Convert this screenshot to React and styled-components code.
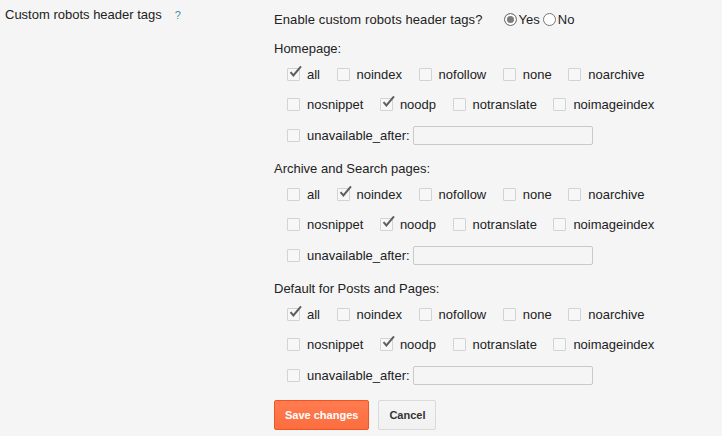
import React from "react";
import styled, { createGlobalStyle } from "styled-components";

const GlobalStyle = createGlobalStyle`
  html, body {
    margin: 0;
    padding: 0;
    background: #f5f5f5;
  }
  body {
    font-family: "Liberation Sans", Arial, sans-serif;
    font-size: 13px;
    color: #222;
  }
`;

const ROW_ONE = ["all", "noindex", "nofollow", "none", "noarchive"];
const ROW_TWO = ["nosnippet", "noodp", "notranslate", "noimageindex"];

const GROUPS = [
  { title: "Homepage:", checked: ["all", "noodp"] },
  { title: "Archive and Search pages:", checked: ["noindex", "noodp"] },
  { title: "Default for Posts and Pages:", checked: ["all", "noodp"] }
];

function Checkbox({ label, checked }) {
  return (
    <Item>
      <Box>
        {checked && (
          <CheckMark viewBox="0 0 16 16" width="16" height="16">
            <path
              d="M2.5 7.2 L5.4 10.4 L13 1.4"
              fill="none"
              stroke="#5e5e5e"
              strokeWidth="2"
            />
          </CheckMark>
        )}
      </Box>
      <ItemText>{label}</ItemText>
    </Item>
  );
}

function Group({ title, checked }) {
  return (
    <GroupRoot>
      <Heading>{title}</Heading>
      <Row>
        {ROW_ONE.map(n => (
          <Checkbox key={n} label={n} checked={checked.includes(n)} />
        ))}
      </Row>
      <Row>
        {ROW_TWO.map(n => (
          <Checkbox key={n} label={n} checked={checked.includes(n)} />
        ))}
      </Row>
      <Row tall>
        <Item>
          <Box />
          <ItemText>unavailable_after:</ItemText>
          <DateInput type="text" />
        </Item>
      </Row>
    </GroupRoot>
  );
}

export default function App() {
  return (
    <Root>
      <GlobalStyle />
      <LeftColumn>
        Custom robots header tags
        <Help>?</Help>
      </LeftColumn>
      <RightColumn>
        <EnableRow>
          <EnableText>Enable custom robots header tags?</EnableText>
          <RadioGroup>
            <RadioLabel>
              <Radio checked />
              Yes
            </RadioLabel>
            <RadioLabel>
              <Radio />
              No
            </RadioLabel>
          </RadioGroup>
        </EnableRow>
        {GROUPS.map(g => (
          <Group key={g.title} title={g.title} checked={g.checked} />
        ))}
        <Buttons>
          <Button primary>Save changes</Button>
          <Button>Cancel</Button>
        </Buttons>
      </RightColumn>
    </Root>
  );
}

const Root = styled.div`
  display: flex;
  padding: 5px 0 0 5px;
  min-height: 431px;
  box-sizing: border-box;
`;

const LeftColumn = styled.div`
  width: 269px;
  flex-shrink: 0;
  line-height: 20px;
  color: #222;
`;

const Help = styled.span`
  margin-left: 13px;
  font-size: 11px;
  color: #3d8db4;
`;

const RightColumn = styled.div`
  display: flex;
  flex-direction: column;
  padding-top: 4px;
`;

const EnableRow = styled.div`
  display: flex;
  align-items: center;
  height: 20px;
  margin-bottom: 10px;
`;

const EnableText = styled.span`
  letter-spacing: 0.1px;
`;

const RadioGroup = styled.div`
  display: flex;
  align-items: center;
  gap: 3px;
  margin-left: 21px;
`;

const RadioLabel = styled.label`
  display: flex;
  align-items: center;
  gap: 2px;
`;

const Radio = styled.span`
  display: inline-block;
  width: 11px;
  height: 11px;
  border-radius: 50%;
  border: 1px solid #767676;
  background: ${p => (p.checked ? "#7c7c7c" : "#fff")};
  box-shadow: ${p => (p.checked ? "inset 0 0 0 2px #fff" : "none")};
`;

const GroupRoot = styled.div`
  display: flex;
  flex-direction: column;
  margin-bottom: 8px;
`;

const Heading = styled.div`
  line-height: 20px;
`;

const Row = styled.div`
  display: flex;
  align-items: center;
  height: ${p => (p.tall ? "32px" : "30px")};
  padding-left: 13px;
  gap: 16.5px;
`;

const Item = styled.label`
  display: flex;
  align-items: center;
`;

const Box = styled.span`
  position: relative;
  display: inline-block;
  width: 11px;
  height: 11px;
  border: 1px solid #d3d3d3;
  border-radius: 1px;
  background: #f7f7f7;
`;

const CheckMark = styled.svg`
  position: absolute;
  left: 0;
  top: -4px;
  overflow: visible;
`;

const ItemText = styled.span`
  margin-left: 7px;
  color: #222;
`;

const DateInput = styled.input`
  width: 180px;
  height: 19px;
  box-sizing: border-box;
  margin-left: 3px;
  border: 1px solid #c9c9c9;
  border-radius: 2px;
  background: #f5f5f5;
  outline: none;
`;

const Buttons = styled.div`
  display: flex;
  gap: 9px;
  margin-top: 1px;
`;

const Button = styled.button`
  height: 30px;
  padding: 0 10px;
  font-family: "Liberation Sans", Arial, sans-serif;
  font-size: 11px;
  font-weight: bold;
  border-radius: 2px;
  border: 1px solid ${p => (p.primary ? "#f0541f" : "#dadada")};
  background: ${p =>
    p.primary
      ? "linear-gradient(#ff7c50, #fb6e3f)"
      : "linear-gradient(#f5f5f5, #f1f1f1)"};
  color: ${p => (p.primary ? "#fff" : "#333")};
`;
